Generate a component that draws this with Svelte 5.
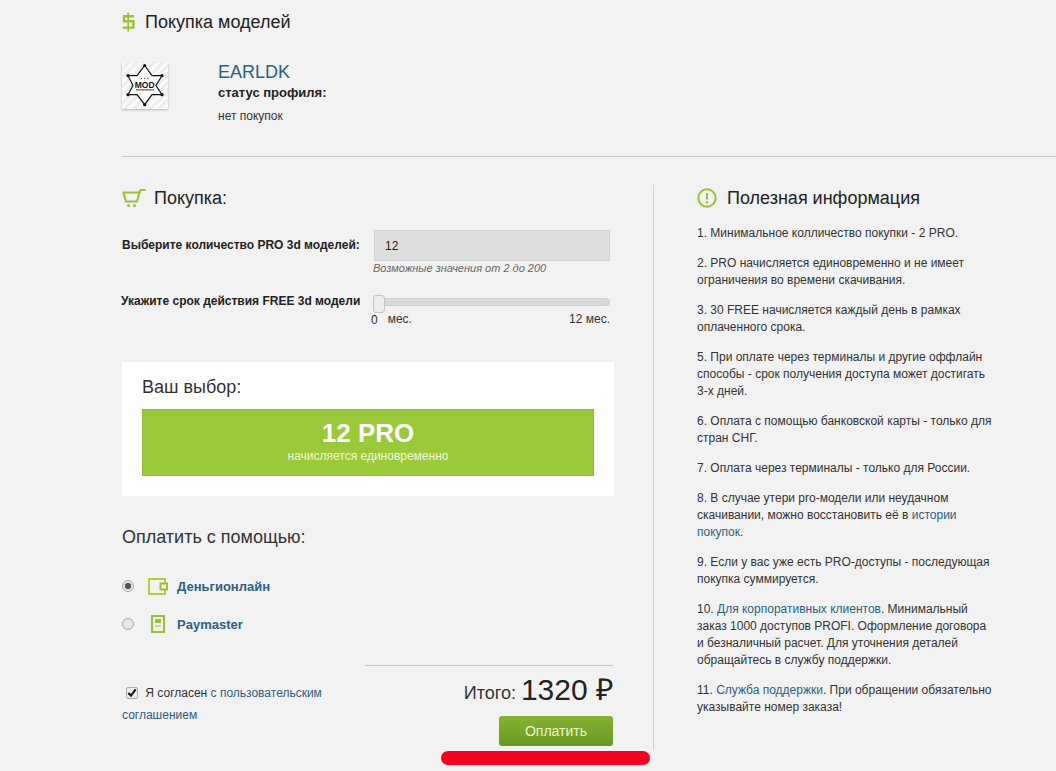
<script lang="ts">
  const tips = [
    ["1. Минимальное колличество покупки - 2 PRO."],
    ["2. PRO начисляется единовременно и не имеет ограничения во времени скачивания."],
    ["3. 30 FREE начисляется каждый день в рамках оплаченного срока."],
    ["5. При оплате через терминалы и другие оффлайн способы - срок получения доступа может достигать 3-х дней."],
    ["6. Оплата с помощью банковской карты - только для стран СНГ."],
    ["7. Оплата через терминалы - только для России."],
    ["8. В случае утери pro-модели или неудачном скачивании, можно восстановить её в ", "истории покупок", "."],
    ["9. Если у вас уже есть PRO-доступы - последующая покупка суммируется."],
    ["10. ", "Для корпоративных клиентов", ". Минимальный заказ 1000 доступов PROFI. Оформление договора и безналичный расчет. Для уточнения деталей обращайтесь в службу поддержки."],
    ["11. ", "Служба поддержки", ". При обращении обязательно указывайте номер заказа!"]
  ]
</script>

<div class="page">
  <header class="top">
    <svg class="dollar" width="13" height="20" viewBox="0 0 13 20" fill="none" stroke="#9bc036" stroke-width="2.4">
      <path d="M12 4.200H2v5h9.400v6.400H0.600" />
      <path d="M6.200 0.500v19" stroke-width="1.600" />
    </svg>
    <h1>Покупка моделей</h1>
  </header>

  <div class="profile">
    <div class="avatar">
      <svg width="46" height="46" viewBox="0 0 46 46" fill="#fff" stroke="#111" stroke-width="1.200">
        <path d="M22.700 2.500L30 12.700H40L34 22.500L40 31.700H30L22.700 41.700L15 31.700H6L11 22.500L6 12.700H15z" />
        <g fill="#111" stroke="none">
          <circle cx="22.700" cy="2.500" r="1.600" />
          <circle cx="22.700" cy="41.700" r="1.600" />
          <circle cx="6" cy="12.700" r="1.600" />
          <circle cx="40" cy="12.700" r="1.600" />
          <circle cx="6" cy="31.700" r="1.600" />
          <circle cx="40" cy="31.700" r="1.600" />
          <circle cx="19.500" cy="15.500" r="0.600" />
          <circle cx="22.700" cy="15.500" r="0.600" />
          <circle cx="25.900" cy="15.500" r="0.600" />
          <rect x="14" y="26.500" width="18" height="0.800" />
        </g>
        <text x="22.700" y="25" text-anchor="middle" class="mod">MOD</text>
      </svg>
    </div>
    <div class="who">
      <a class="name" href="#earldk">EARLDK</a>
      <strong>статус профиля:</strong>
      <span class="none">нет покупок</span>
    </div>
  </div>

  <hr class="rule" />

  <div class="columns">
    <section class="buy">
      <h2 class="buy-title">
        <svg width="24" height="19" viewBox="0 0 24 19" fill="none" stroke="#9bc036" stroke-width="2">
          <path d="M0.500 3.500H17.500L15 12.500H4L1.500 4" />
          <path d="M17 4L18.500 1H23.500" />
          <circle cx="6.500" cy="16.500" r="1.500" fill="#9bc036" stroke="none" />
          <circle cx="12.500" cy="16.500" r="1.500" fill="#9bc036" stroke="none" />
        </svg>
        Покупка:
      </h2>

      <div class="field">
        <span class="field-label">Выберите количество PRO 3d моделей:</span>
        <div class="field-ctl">
          <input class="count" type="text" value="12" />
          <em>Возможные значения от 2 до 200</em>
        </div>
      </div>

      <div class="field term">
        <span class="field-label">Укажите срок действия FREE 3d модели</span>
        <div class="field-ctl">
          <div class="track"><span class="thumb"></span></div>
          <div class="scale">
            <span><b>0</b>мес.</span>
            <span>12 мес.</span>
          </div>
        </div>
      </div>

      <div class="choice">
        <h3>Ваш выбор:</h3>
        <div class="banner">
          <span class="qty">12 PRO</span>
          <span class="note">начисляется единовременно</span>
        </div>
      </div>

      <h3 class="pay-title">Оплатить с помощью:</h3>

      <label class="method first">
        <span class="radio on"></span>
        <span class="method-icon">
          <svg width="20" height="17" viewBox="0 0 20 17" fill="none" stroke="#b3cc3a" stroke-width="2">
            <path d="M17 5V1H1v15h16v-4" />
            <rect x="12.500" y="5.500" width="6.500" height="6" fill="#f2f2f2" stroke="#9bc036" />
          </svg>
        </span>
        <span>Деньгионлайн</span>
      </label>
      <label class="method">
        <span class="radio"></span>
        <span class="method-icon">
          <svg width="14" height="18" viewBox="0 0 14 18" fill="none" stroke="#9bc036" stroke-width="2">
            <rect x="1" y="1" width="12" height="16" />
            <rect x="4" y="4" width="6" height="4" fill="#9bc036" stroke="none" />
            <path d="M4 11h6" stroke-width="1" />
          </svg>
        </span>
        <span>Paymaster</span>
      </label>

      <div class="bottom">
        <p class="agree">
          <span class="check">
            <svg width="11" height="10" viewBox="0 0 11 10" fill="none" stroke="#111" stroke-width="2.200"><path d="M1.500 5l2.800 3L9.500 1" /></svg>
          </span>
          Я согласен <a href="#terms">с пользовательским соглашением</a>
        </p>
        <div class="total">
          <p class="sum">Итого: <span>1320 ₽</span></p>
          <button type="button">Оплатить</button>
        </div>
      </div>
      <div class="marker"></div>
    </section>

    <aside class="info">
      <h2>
        <svg width="20" height="20" viewBox="0 0 20 20" fill="none">
          <circle cx="10" cy="10" r="8.700" stroke="#9bc036" stroke-width="2" />
          <path d="M10 5v6.500" stroke="#9bc036" stroke-width="2" />
          <circle cx="10" cy="14.300" r="1.200" fill="#9bc036" />
        </svg>
        Полезная информация
      </h2>
      {#each tips as tip}
        <p>{tip[0]}{#if tip[1]}<a href="#tip">{tip[1]}</a>{tip[2]}{/if}</p>
      {/each}
    </aside>
  </div>
</div>

<style>
  :global(body) {
    background: #f2f2f2;
    font-family: "Liberation Sans", Arial, sans-serif;
    color: #222;
    overflow: hidden;
  }

  a {
    color: #2b6184;
    text-decoration: none;
  }

  .page {
    height: 771px;
    padding-left: 122px;
    box-sizing: border-box;
    overflow: hidden;
  }

  .top {
    display: flex;
    align-items: center;
    gap: 10px;
    height: 20px;
    padding-top: 12px;
  }

  h1 {
    margin: 0;
    font-size: 18px;
    font-weight: 400;
    line-height: 20px;
  }

  .profile {
    display: flex;
    gap: 50px;
    margin-top: 31px;
    height: 93px;
  }

  .avatar {
    display: flex;
    align-items: center;
    justify-content: center;
    width: 46px;
    height: 46px;
    background: repeating-linear-gradient(135deg, #fafafa 0 3px, #eeeeee 3px 6px);
    box-shadow: 0 1px 2px rgba(0, 0, 0, 0.25);
  }

  .mod {
    font-size: 8.500px;
    font-weight: 700;
    fill: #111;
    stroke: none;
    font-family: "Liberation Sans", Arial, sans-serif;
  }

  .who {
    display: flex;
    flex-direction: column;
  }

  .name {
    font-size: 18px;
    line-height: 20px;
    margin-top: -1px;
  }

  .who strong {
    font-size: 13px;
    line-height: 16px;
    margin-top: 3px;
  }

  .none {
    font-size: 12px;
    line-height: 16px;
    margin-top: 7px;
    color: #333;
  }

  .rule {
    margin: 0;
    border: 0;
    border-top: 1px solid #c8c8c8;
  }

  .columns {
    display: flex;
    margin-top: 28px;
  }

  .buy {
    width: 492px;
    flex-shrink: 0;
    position: relative;
  }

  .buy-title {
    display: flex;
    align-items: center;
    gap: 8px;
    margin: 0;
    height: 26px;
    font-size: 18px;
    font-weight: 400;
  }

  .field {
    display: flex;
    margin-top: 19px;
  }

  .field-label {
    width: 252px;
    flex-shrink: 0;
    font-size: 12px;
    font-weight: 700;
    line-height: 16px;
    padding-top: 7px;
  }

  .field-ctl {
    width: 236px;
    display: flex;
    flex-direction: column;
  }

  .count {
    box-sizing: border-box;
    width: 100%;
    height: 31px;
    padding: 0 10px;
    background: #dedede;
    border: 1px solid #d2d2d2;
    font: 12px "Liberation Sans", Arial, sans-serif;
    color: #222;
  }

  em {
    font-size: 11px;
    line-height: 14px;
    margin-left: -1px;
    color: #666;
  }

  .term {
    margin-top: 18px;
    align-items: flex-start;
  }

  .term .field-label {
    padding-top: 0;
    margin-left: -1px;
    width: 253px;
  }

  .term .field-ctl {
    margin-top: 5px;
  }

  .track {
    position: relative;
    height: 6px;
    background: #d8d8d8;
    border: 1px solid #cfcfcf;
    border-radius: 4px;
  }

  .thumb {
    position: absolute;
    left: -2px;
    top: -4px;
    width: 10px;
    height: 16px;
    background: #eee;
    border: 1px solid #c4c4c4;
    border-radius: 3px;
  }

  .scale {
    display: flex;
    justify-content: space-between;
    margin-top: 6px;
    font-size: 12px;
    line-height: 14px;
    color: #333;
  }

  .scale b {
    font-weight: 400;
    margin: 0 10px 0 -3px;
    position: relative;
    top: 1px;
  }

  .choice {
    margin-top: 36px;
    padding: 13px 20px 20px;
    background: #fff;
  }

  h3 {
    margin: 0;
    font-size: 18px;
    font-weight: 400;
    line-height: 24px;
    color: #333;
  }

  .banner {
    box-sizing: border-box;
    display: flex;
    flex-direction: column;
    align-items: center;
    height: 67px;
    margin-top: 10px;
    background: #9aca3c;
    border: 1px solid #8fbb38;
    color: #fff;
  }

  .qty {
    font-size: 26px;
    font-weight: 700;
    line-height: 30px;
    margin-top: 8px;
  }

  .note {
    font-size: 12px;
    line-height: 14px;
    margin-top: 1px;
    color: #eef6d8;
  }

  .pay-title {
    margin-top: 29px;
  }

  .method {
    display: flex;
    align-items: center;
    height: 20px;
    font-size: 13px;
    font-weight: 700;
    color: #2b6184;
  }

  .method.first {
    margin-top: 27px;
    margin-bottom: 18px;
  }

  .radio {
    box-sizing: border-box;
    width: 12px;
    height: 12px;
    border-radius: 50%;
    background: #e6e6e6;
    border: 1px solid #a8a8a8;
  }

  .radio.on {
    background: radial-gradient(circle, #555 0 3px, #e6e6e6 3.500px);
  }

  .method-icon {
    display: flex;
    justify-content: center;
    width: 22px;
    margin: 0 8px 0 13px;
  }

  .bottom {
    display: flex;
    justify-content: space-between;
    margin-top: 31px;
  }

  .agree {
    width: 215px;
    margin: 17px 0 0;
    font-size: 12px;
    line-height: 22px;
    color: #333;
  }

  .check {
    display: inline-flex;
    align-items: center;
    justify-content: center;
    box-sizing: border-box;
    width: 12px;
    height: 12px;
    margin: 0 4px 0 4px;
    background: #eee;
    border: 1px solid #aaa;
    border-radius: 2px;
    vertical-align: -1px;
  }

  .total {
    box-sizing: border-box;
    width: 248px;
    margin-right: 1px;
    border-top: 1px solid #c8c8c8;
    display: flex;
    flex-direction: column;
    align-items: flex-end;
  }

  .sum {
    margin: 6px 0 0;
    font-size: 18px;
    line-height: 36px;
    color: #333;
  }

  .sum span {
    font-size: 30px;
    color: #222;
    vertical-align: -1px;
  }

  button {
    width: 114px;
    height: 30px;
    margin-top: 5px;
    background: linear-gradient(#86b230, #689a24);
    border: 0;
    border-radius: 3px;
    color: #edf5d0;
    font: 14px "Liberation Sans", Arial, sans-serif;
  }

  .marker {
    position: absolute;
    left: 319px;
    top: 566px;
    width: 209px;
    height: 14px;
    background: #f5001e;
    border-radius: 7px;
  }

  .info {
    width: 340px;
    margin-left: 39px;
    padding-left: 43px;
    border-left: 1px solid #d2d2d2;
    height: 565px;
    box-sizing: border-box;
  }

  .info h2 {
    display: flex;
    align-items: center;
    gap: 10px;
    margin: 0 0 14px;
    height: 26px;
    font-size: 18px;
    font-weight: 400;
  }

  .info p {
    width: 296px;
    margin: 0 0 13px;
    font-size: 12px;
    line-height: 17px;
    color: #333;
  }
</style>
